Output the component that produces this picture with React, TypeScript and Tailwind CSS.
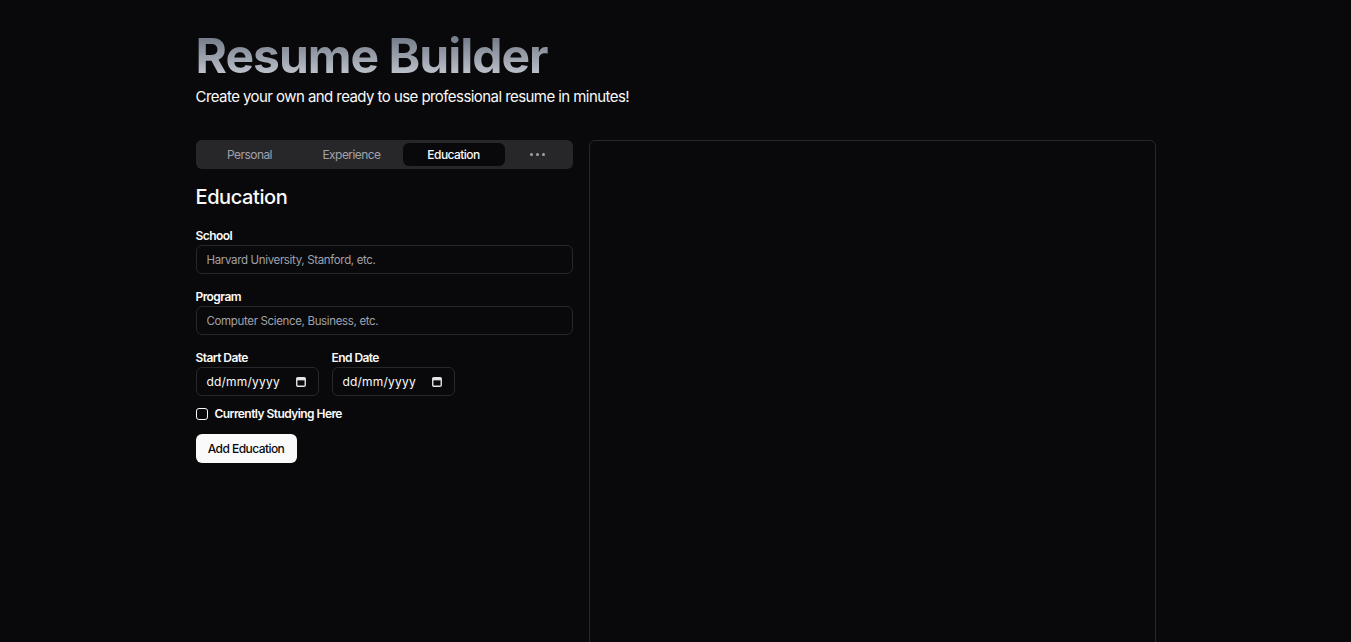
import React from "react";

function CalendarIcon() {
  return (
    <svg width="10" height="10" viewBox="0 0 10 10" className="shrink-0">
      <rect x="0.75" y="0.75" width="8.5" height="8.5" rx="1.2" fill="none" stroke="#e4e4e7" strokeWidth="1.4" />
      <rect x="0.75" y="0.75" width="8.5" height="2.6" fill="#e4e4e7" />
    </svg>
  );
}

function DateField({ label }: { label: string }) {
  return (
    <div className="flex flex-col gap-[1px]">
      <label className="text-xs font-semibold leading-4 text-[#fafafa]">{label}</label>
      <div className="flex h-[29px] w-[123px] items-center justify-between rounded-md border border-[#27272a] pl-[10px] pr-[12px] text-xs text-[#fafafa]">
        <span className="tracking-[0.2px]">dd/mm/yyyy</span>
        <CalendarIcon />
      </div>
    </div>
  );
}

function TextField({ label, placeholder }: { label: string; placeholder: string }) {
  return (
    <div className="flex flex-col gap-[1px]">
      <label className="text-xs font-semibold leading-4 text-[#fafafa]">{label}</label>
      <input
        placeholder={placeholder}
        className="h-[29px] w-full rounded-md border border-[#27272a] bg-transparent px-[10px] text-[11.5px] tracking-[-0.03em] text-[#fafafa] outline-none placeholder:text-[#a1a1aa]"
      />
    </div>
  );
}

export default function App() {
  return (
    <div
      className="relative min-h-[642px] bg-[#09090b] tracking-[-0.035em] text-[#fafafa]"
      style={{ fontFamily: "Inter, 'Noto Sans', sans-serif" }}
    >
      <div className="mx-auto max-w-[960px] pt-[32px]">
        <h1 className="bg-gradient-to-b from-[#6b7280] to-[#c9ced6] bg-clip-text text-[48px] font-bold leading-[48px] tracking-[-1px] text-transparent">
          Resume Builder
        </h1>
        <p className="mt-[7px] text-[15px] leading-[20px] text-[#fafafa]">
          Create your own and ready to use professional resume in minutes!
        </p>

        <div className="mt-[33px] grid grid-cols-[377px_1fr] gap-4">
          <div className="flex flex-col">
            <div className="flex h-[29px] items-center rounded-md bg-[#27272a] p-[3px] text-xs">
              <div className="flex h-full w-[102px] items-center justify-center text-[#a1a1aa]">Personal</div>
              <div className="flex h-full w-[102px] items-center justify-center text-[#a1a1aa]">Experience</div>
              <div className="flex h-full w-[102px] items-center justify-center rounded-md bg-[#09090b] font-medium text-[#fafafa]">
                Education
              </div>
              <div className="flex h-full flex-1 items-center justify-center gap-[3px]">
                <span className="h-[3px] w-[3px] rounded-full bg-[#a1a1aa]" />
                <span className="h-[3px] w-[3px] rounded-full bg-[#a1a1aa]" />
                <span className="h-[3px] w-[3px] rounded-full bg-[#a1a1aa]" />
              </div>
            </div>

            <h2 className="mt-[16px] text-xl font-medium leading-[24px] tracking-[-0.02em]">Education</h2>

            <div className="mt-[19px] flex flex-col gap-[15px]">
              <TextField label="School" placeholder="Harvard University, Stanford, etc." />
              <TextField label="Program" placeholder="Computer Science, Business, etc." />
              <div className="flex gap-[13px]">
                <DateField label="Start Date" />
                <DateField label="End Date" />
              </div>
            </div>

            <label className="mt-[10px] flex h-4 items-center gap-[7px] text-xs font-semibold">
              <span className="h-[12px] w-[12px] rounded-[3px] border border-[#fafafa]" />
              Currently Studying Here
            </label>

            <button className="mt-[12px] h-[29px] w-[101px] rounded-md bg-[#fafafa] text-xs font-medium text-[#09090b]">
              Add Education
            </button>
          </div>

          <div className="h-[520px] rounded-md border border-[#27272a]" />
        </div>
      </div>
      <div className="absolute bottom-0 left-[100px] h-[2px] w-[48px] bg-[#3f3f46]" />
    </div>
  );
}
